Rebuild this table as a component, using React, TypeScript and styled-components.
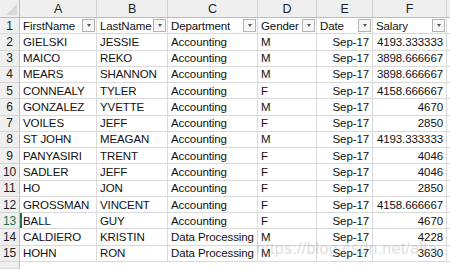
import React from 'react';
import styled, { createGlobalStyle } from 'styled-components';

const Global = createGlobalStyle`
  html, body { margin: 0; padding: 0; background: #fff; }
  body { font-family: 'Liberation Sans', Arial, sans-serif; }
`;

const Sheet = styled.div`
  position: relative;
  width: 450px;
  height: 269px;
  overflow: hidden;
  display: grid;
  grid-template-columns: 20px 77px 71px 90px 59px 56px 74px 1fr;
  grid-template-rows: 18px repeat(15, 16.27px) 1fr;
  font-size: 11.5px;
  letter-spacing: -0.1px;
  color: #111;
`;

const Corner = styled.div`
  background: #efefef;
  border-right: 1px solid #bcbcbc;
  border-bottom: 1px solid #bcbcbc;
  position: relative;
  &::after {
    content: '';
    position: absolute;
    right: 2px;
    bottom: 2px;
    border-left: 11px solid transparent;
    border-bottom: 11px solid #d9d9d9;
  }
`;

const ColHead = styled.div`
  background: #efefef;
  border-right: 1px solid #cfcfcf;
  border-bottom: 1px solid #bcbcbc;
  display: flex;
  align-items: center;
  justify-content: center;
  color: #222;
  font-size: 12.5px;
`;

const RowHead = styled.div<{ $active?: boolean }>`
  background: #efefef;
  border-right: 1px solid #bcbcbc;
  border-bottom: 1px solid #d6d6d6;
  display: flex;
  align-items: center;
  justify-content: center;
  color: ${p => (p.$active ? '#217346' : '#222')};
  font-size: 12px;
`;

const Cell = styled.div<{ $right?: boolean; $selected?: boolean }>`
  border-right: 1px solid #dadada;
  border-bottom: 1px solid #dadada;
  display: flex;
  align-items: center;
  justify-content: ${p => (p.$right ? 'flex-end' : 'flex-start')};
  padding: 0 3px;
  white-space: nowrap;
  overflow: hidden;
  box-shadow: ${p => (p.$selected ? 'inset 2px 0 0 #217346' : 'none')};
`;

const HeadCell = styled(Cell)`
  justify-content: space-between;
  padding-right: 1px;
`;

const Filter = styled.span`
  width: 11px;
  height: 11px;
  border: 1px solid #b4b4b4;
  background: #f6f6f6;
  display: flex;
  align-items: center;
  justify-content: center;
  flex-shrink: 0;
  &::after {
    content: '';
    border-left: 2.5px solid transparent;
    border-right: 2.5px solid transparent;
    border-top: 3px solid #555;
  }
`;

const Blank = styled.div<{ $head?: boolean }>`
  background: ${p => (p.$head ? '#efefef' : 'transparent')};
  border-bottom: 1px solid ${p => (p.$head ? '#bcbcbc' : '#dadada')};
`;

const Watermark = styled.div`
  position: absolute;
  left: 256px;
  top: 240px;
  font-size: 16px;
  color: rgba(140, 140, 140, 0.3);
  pointer-events: none;
  letter-spacing: 0.3px;
`;

const cols = ['A', 'B', 'C', 'D', 'E', 'F'];
const heads = ['FirstName', 'LastName', 'Department', 'Gender', 'Date', 'Salary'];

const rows: string[][] = [
  ['GIELSKI', 'JESSIE', 'Accounting', 'M', 'Sep-17', '4193.333333'],
  ['MAICO', 'REKO', 'Accounting', 'M', 'Sep-17', '3898.666667'],
  ['MEARS', 'SHANNON', 'Accounting', 'M', 'Sep-17', '3898.666667'],
  ['CONNEALY', 'TYLER', 'Accounting', 'F', 'Sep-17', '4158.666667'],
  ['GONZALEZ', 'YVETTE', 'Accounting', 'M', 'Sep-17', '4670'],
  ['VOILES', 'JEFF', 'Accounting', 'F', 'Sep-17', '2850'],
  ['ST JOHN', 'MEAGAN', 'Accounting', 'M', 'Sep-17', '4193.333333'],
  ['PANYASIRI', 'TRENT', 'Accounting', 'F', 'Sep-17', '4046'],
  ['SADLER', 'JEFF', 'Accounting', 'F', 'Sep-17', '4046'],
  ['HO', 'JON', 'Accounting', 'F', 'Sep-17', '2850'],
  ['GROSSMAN', 'VINCENT', 'Accounting', 'F', 'Sep-17', '4158.666667'],
  ['BALL', 'GUY', 'Accounting', 'F', 'Sep-17', '4670'],
  ['CALDIERO', 'KRISTIN', 'Data Processing', 'M', 'Sep-17', '4228'],
  ['HOHN', 'RON', 'Data Processing', 'M', 'Sep-17', '3630'],
];

export default function App() {
  return (
    <>
      <Global />
      <Sheet>
        <Corner />
        {cols.map(c => (
          <ColHead key={c}>{c}</ColHead>
        ))}
        <Blank $head />

        <RowHead>1</RowHead>
        {heads.map(h => (
          <HeadCell key={h}>
            {h}
            <Filter />
          </HeadCell>
        ))}
        <Blank />

        {rows.map((r, i) => {
          const n = i + 2;
          return (
            <React.Fragment key={n}>
              <RowHead $active={n === 13}>{n}</RowHead>
              {r.map((v, j) => (
                <Cell key={j} $right={j >= 4} $selected={n === 13 && j === 0}>
                  {v}
                </Cell>
              ))}
              <Blank />
            </React.Fragment>
          );
        })}
        <RowHead />
        <Watermark>https://blog.csdn.net/alta</Watermark>
      </Sheet>
    </>
  );
}
